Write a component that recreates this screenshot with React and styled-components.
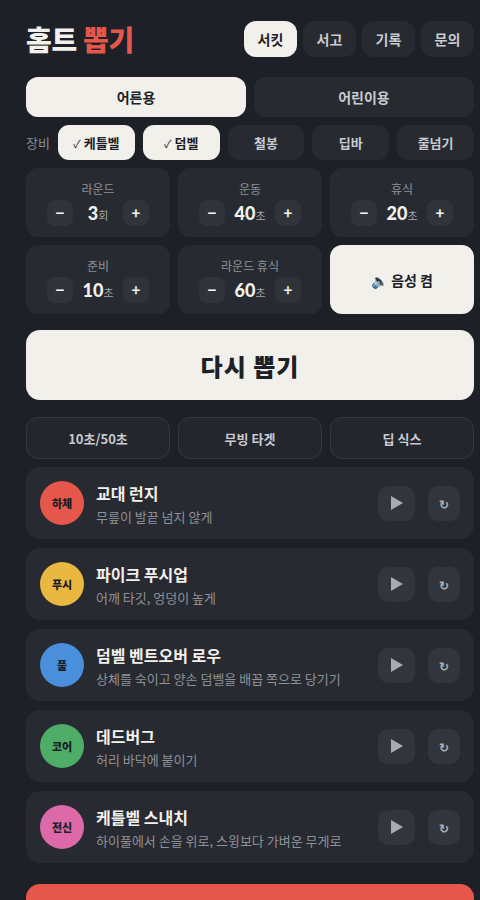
import styled, { createGlobalStyle } from "styled-components";

const GlobalStyle = createGlobalStyle`
  html, body {
    margin: 0;
    padding: 0;
    background: #1d2027;
  }
  body {
    font-family: "Noto Sans CJK KR", "Noto Sans", sans-serif;
    color: #f2f0eb;
  }
  button {
    font-family: inherit;
    border: none;
    cursor: pointer;
  }
`;

const StyledPage = styled.div`
  width: 448px;
  padding: 21px 6px 0 26px;
  display: flex;
  flex-direction: column;
`;

const StyledHeader = styled.header`
  display: flex;
  align-items: center;
  justify-content: space-between;
  height: 36px;
`;

const StyledTitle = styled.h1`
  margin: 0;
  font-size: 28px;
  font-weight: 900;
  letter-spacing: -0.3px;
  color: #f2f0eb;

  span {
    color: #e5574a;
  }
`;

const StyledTabs = styled.nav`
  display: flex;
  gap: 6px;
`;

const StyledTab = styled.button`
  width: 53px;
  height: 36px;
  border-radius: 12px;
  font-size: 14px;
  font-weight: 700;
  background: ${({ $active }) => ($active ? "#f2f0eb" : "#272a31")};
  color: ${({ $active }) => ($active ? "#1d2027" : "#c9cbd0")};
`;

const StyledSegment = styled.div`
  display: grid;
  grid-template-columns: 1fr 1fr;
  gap: 8px;
  margin-top: 20px;
`;

const StyledSegmentButton = styled.button`
  height: 40px;
  border-radius: 12px;
  font-size: 14px;
  font-weight: 700;
  background: ${({ $active }) => ($active ? "#f2f0eb" : "#272a31")};
  color: ${({ $active }) => ($active ? "#1d2027" : "#c9cbd0")};
`;

const StyledEquipRow = styled.div`
  display: flex;
  align-items: center;
  gap: 8px;
  margin-top: 8px;
`;

const StyledEquipLabel = styled.span`
  width: 24px;
  font-size: 13px;
  color: #8a8d94;
`;

const StyledChip = styled.button`
  flex: 1;
  height: 35px;
  border-radius: 11px;
  font-size: 13px;
  font-weight: 700;
  background: ${({ $active }) => ($active ? "#f2f0eb" : "#272a31")};
  color: ${({ $active }) => ($active ? "#1d2027" : "#c9cbd0")};
`;

const StyledCheck = styled.span`
  font-size: 11px;
  font-weight: 400;
  margin-right: 3px;
`;

const StyledGrid = styled.div`
  display: grid;
  grid-template-columns: repeat(3, 1fr);
  gap: 8px;
  margin-top: 8px;
`;

const StyledStepCard = styled.div`
  height: 69px;
  border-radius: 12px;
  background: #272a31;
  display: flex;
  flex-direction: column;
  align-items: center;
  justify-content: center;
  gap: 3px;
`;

const StyledStepLabel = styled.span`
  font-size: 12px;
  color: #8f9298;
`;

const StyledStepControls = styled.div`
  display: flex;
  align-items: center;
  gap: 4px;
`;

const StyledStepButton = styled.button`
  width: 26px;
  height: 26px;
  border-radius: 8px;
  background: #30333a;
  color: #f2f0eb;
  font-size: 15px;
  font-weight: 700;
  display: flex;
  align-items: center;
  justify-content: center;
  padding: 0;
`;

const StyledStepValue = styled.span`
  min-width: 42px;
  text-align: center;
  font-family: Lato, "Noto Sans CJK KR", sans-serif;
  font-size: 18px;
  font-weight: 900;
  color: #f2f0eb;

  small {
    font-family: "Noto Sans CJK KR", sans-serif;
    font-size: 11px;
    font-weight: 400;
    color: #a3a6ac;
  }
`;

const StyledVoiceButton = styled.button`
  height: 69px;
  border-radius: 12px;
  background: #f2f0eb;
  color: #1d2027;
  font-size: 14px;
  font-weight: 700;
`;

const StyledDrawButton = styled.button`
  margin-top: 16px;
  height: 70px;
  border-radius: 14px;
  background: #f2f0eb;
  color: #1d2027;
  font-size: 24px;
  font-weight: 900;
  letter-spacing: 1px;
`;

const StyledPresetRow = styled.div`
  display: grid;
  grid-template-columns: repeat(3, 1fr);
  gap: 8px;
  margin-top: 17px;
`;

const StyledPreset = styled.button`
  height: 42px;
  border-radius: 12px;
  border: 1px solid #363940 !important;
  background: #23262d;
  color: #c9cbd0;
  font-size: 13px;
  font-weight: 700;
`;

const StyledList = styled.div`
  display: flex;
  flex-direction: column;
  gap: 9px;
  margin-top: 8px;
`;

const StyledExercise = styled.div`
  height: 72px;
  border-radius: 14px;
  background: #272a31;
  display: flex;
  align-items: center;
  padding: 0 14px;
  gap: 12px;
`;

const StyledBadge = styled.div`
  width: 44px;
  height: 44px;
  border-radius: 50%;
  flex-shrink: 0;
  background: ${({ $color }) => $color};
  color: #1d2027;
  font-size: 11px;
  font-weight: 900;
  display: flex;
  align-items: center;
  justify-content: center;
`;

const StyledInfo = styled.div`
  flex: 1;
  display: flex;
  flex-direction: column;
  gap: 2px;
`;

const StyledName = styled.span`
  font-size: 16px;
  font-weight: 700;
  color: #f2f0eb;
`;

const StyledCue = styled.span`
  font-size: 13px;
  color: #8f9298;
`;

const StyledActions = styled.div`
  display: flex;
  gap: 13px;
`;

const StyledAction = styled.button`
  width: ${({ $wide }) => ($wide ? "37px" : "32px")};
  height: 35px;
  border-radius: 10px;
  background: #32353c;
  color: #a9abb0;
  display: flex;
  align-items: center;
  justify-content: center;
  padding: 0;
  font-size: 12px;
  font-weight: 900;
`;

const StyledStartButton = styled.button`
  margin-top: 21px;
  height: 60px;
  border-radius: 14px;
  background: #e5574a;
`;

const steps = [
  { label: "라운드", value: 3, unit: "회" },
  { label: "운동", value: 40, unit: "초" },
  { label: "휴식", value: 20, unit: "초" },
  { label: "준비", value: 10, unit: "초" },
  { label: "라운드 휴식", value: 60, unit: "초" },
];

const equipment = [
  { name: "케틀벨", on: true },
  { name: "덤벨", on: true },
  { name: "철봉", on: false },
  { name: "딥바", on: false },
  { name: "줄넘기", on: false },
];

const exercises = [
  { tag: "하체", color: "#e5574a", name: "교대 런지", cue: "무릎이 발끝 넘지 않게" },
  { tag: "푸시", color: "#e9b840", name: "파이크 푸시업", cue: "어깨 타깃, 엉덩이 높게" },
  { tag: "풀", color: "#4a8fdc", name: "덤벨 벤트오버 로우", cue: "상체를 숙이고 양손 덤벨을 배꼽 쪽으로 당기기" },
  { tag: "코어", color: "#4eae67", name: "데드버그", cue: "허리 바닥에 붙이기" },
  { tag: "전신", color: "#dc6aa8", name: "케틀벨 스내치", cue: "하이풀에서 손을 위로, 스윙보다 가벼운 무게로" },
];

const Stepper = ({ label, value, unit }) => (
  <StyledStepCard>
    <StyledStepLabel>{label}</StyledStepLabel>
    <StyledStepControls>
      <StyledStepButton>−</StyledStepButton>
      <StyledStepValue>
        {value}
        <small>{unit}</small>
      </StyledStepValue>
      <StyledStepButton>+</StyledStepButton>
    </StyledStepControls>
  </StyledStepCard>
);

const App = () => {
  return (
    <StyledPage>
      <GlobalStyle />
      <StyledHeader>
        <StyledTitle>
          홈트 <span>뽑기</span>
        </StyledTitle>
        <StyledTabs>
          <StyledTab $active>서킷</StyledTab>
          <StyledTab>서고</StyledTab>
          <StyledTab>기록</StyledTab>
          <StyledTab>문의</StyledTab>
        </StyledTabs>
      </StyledHeader>

      <StyledSegment>
        <StyledSegmentButton $active>어른용</StyledSegmentButton>
        <StyledSegmentButton>어린이용</StyledSegmentButton>
      </StyledSegment>

      <StyledEquipRow>
        <StyledEquipLabel>장비</StyledEquipLabel>
        {equipment.map((item) => (
          <StyledChip key={item.name} $active={item.on}>
            {item.on && <StyledCheck>✓</StyledCheck>}
            {item.name}
          </StyledChip>
        ))}
      </StyledEquipRow>

      <StyledGrid>
        {steps.map((step) => (
          <Stepper key={step.label} {...step} />
        ))}
        <StyledVoiceButton>🔈 음성 켬</StyledVoiceButton>
      </StyledGrid>

      <StyledDrawButton>다시 뽑기</StyledDrawButton>

      <StyledPresetRow>
        <StyledPreset>10초/50초</StyledPreset>
        <StyledPreset>무빙 타겟</StyledPreset>
        <StyledPreset>딥 식스</StyledPreset>
      </StyledPresetRow>

      <StyledList>
        {exercises.map((ex) => (
          <StyledExercise key={ex.name}>
            <StyledBadge $color={ex.color}>{ex.tag}</StyledBadge>
            <StyledInfo>
              <StyledName>{ex.name}</StyledName>
              <StyledCue>{ex.cue}</StyledCue>
            </StyledInfo>
            <StyledActions>
              <StyledAction $wide>
                <svg width="14" height="16" viewBox="0 0 14 16">
                  <path d="M1 1 L13 8 L1 15 Z" fill="#a9abb0" />
                </svg>
              </StyledAction>
              <StyledAction>↻</StyledAction>
            </StyledActions>
          </StyledExercise>
        ))}
      </StyledList>

      <StyledStartButton />
    </StyledPage>
  );
};

export default App;
